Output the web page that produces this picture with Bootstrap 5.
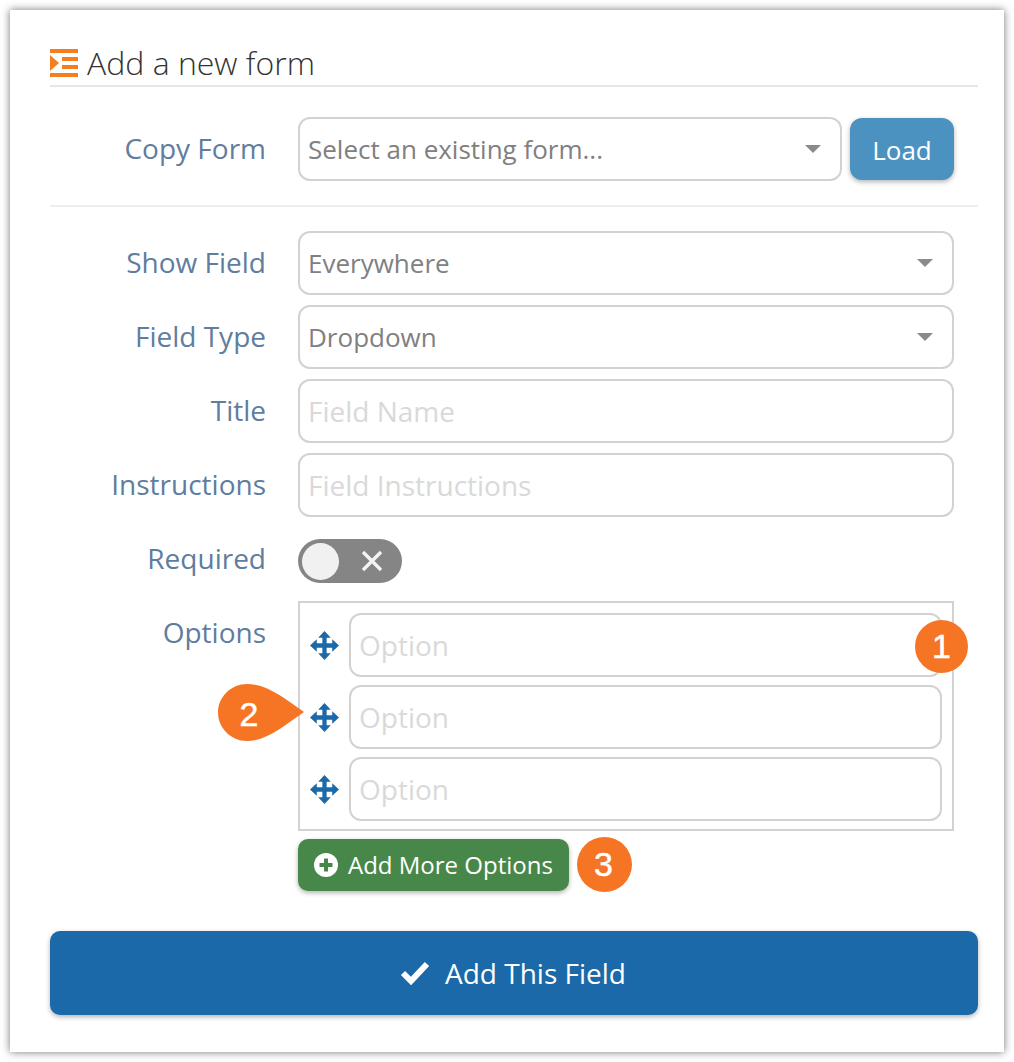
<!DOCTYPE html>
<html lang="en">
<head>
  <meta charset="UTF-8" />
  <meta name="viewport" content="width=device-width, initial-scale=1.0"/>
  <title>Add a new form</title>
  <link href="https://cdn.jsdelivr.net/npm/bootstrap@5.3.0/dist/css/bootstrap.min.css" rel="stylesheet"/>
  <script src="https://cdn.jsdelivr.net/npm/bootstrap@5.3.0/dist/js/bootstrap.bundle.min.js"></script>
  <style>
    body {
      background: #fff;
      font-family: "Open Sans", "Liberation Sans", sans-serif;
    }
    .sheet {
      margin: 10px;
      width: 994px;
      height: 1042px;
      padding: 27px 26px 0 40px;
      background: #fff;
      box-shadow: 0 0 8px rgba(0, 0, 0, .55);
      position: relative;
    }
    .form-head {
      height: 50px;
      padding-top: 4px;
      gap: 8px;
      border-bottom: 2px solid #e6e6e6;
      font-size: 32px;
      font-weight: 300;
      color: #333;
      line-height: 46px;
    }
    .field-row {
      display: flex;
      gap: 32px;
      padding-right: 24px;
      margin-bottom: 10px;
    }
    .copy-row {
      margin-top: 30px;
      margin-bottom: 0;
    }
    .toggle-row {
      height: 74px;
      margin-bottom: 0;
    }
    .options-row { margin-bottom: 0; }
    .field-label {
      width: 216px;
      flex: none;
      text-align: right;
      font-size: 28px;
      line-height: 62px;
      color: #5f7d9e;
      margin: 0;
    }
    .field-box {
      height: 64px;
      border: 2px solid #d2d2d2;
      border-radius: 12px;
      font-size: 28px;
      padding: 0 8px;
      color: #808080;
      box-shadow: none;
      background-color: #fff;
    }
    .field-box::placeholder { color: #d9d9d9; }
    .field-select {
      font-size: 26px;
      background-image: none;
      display: flex;
      align-items: center;
      justify-content: space-between;
      padding-right: 19px;
    }
    .caret-down {
      width: 0;
      height: 0;
      border-left: 8px solid transparent;
      border-right: 8px solid transparent;
      border-top: 8px solid #8a8a8a;
    }
    .load-btn {
      width: 104px;
      height: 62px;
      flex: none;
      align-self: center;
      background: #4b92c1;
      color: #fff;
      font-size: 26px;
      line-height: 64px;
      border: 0;
      border-radius: 12px;
      box-shadow: 0 2px 5px rgba(0, 0, 0, .3);
      padding: 0;
    }
    .soft-rule {
      border-top: 2px solid #eee;
      margin: 24px 0;
      opacity: 1;
    }
    .toggle-pill {
      width: 104px;
      height: 44px;
      margin-top: 12px;
      border-radius: 22px;
      background: #858585;
      padding: 0 19px 0 4px;
    }
    .toggle-knob {
      width: 37px;
      height: 37px;
      border-radius: 50%;
      background: #f1f1f1;
    }
    .options-box {
      border: 2px solid #d2d2d2;
      padding: 10px 10px 8px 10px;
      width: 656px;
      height: 230px;
      gap: 8px;
    }
    .option-line { gap: 10px; }
    .more-btn {
      height: 52px;
      width: 271px;
      background: #47884a;
      color: #fff;
      font-size: 24px;
      line-height: 50px;
      border: 0;
      border-radius: 10px;
      box-shadow: 0 2px 5px rgba(0, 0, 0, .3);
      gap: 10px;
      padding: 0 0 0 16px;
    }
    .submit-btn {
      width: 928px;
      height: 84px;
      margin-top: 40px;
      padding-right: 14px;
      background: #1b69a8;
      color: #fff;
      font-size: 28px;
      border: 0;
      border-radius: 10px;
      box-shadow: 0 2px 5px rgba(0, 0, 0, .3);
      gap: 15px;
    }
    .step-dot {
      background: #f57524;
      color: #fff;
      border-radius: 50%;
      font-family: "Liberation Sans", Arial, sans-serif;
      font-size: 34px;
      -webkit-text-stroke: .5px #fff;
      display: flex;
      align-items: center;
      justify-content: center;
    }
    .step-one {
      position: absolute;
      left: 905px;
      top: 610px;
      width: 53px;
      height: 53px;
    }
    .step-two {
      position: absolute;
      left: 208px;
      top: 674px;
      width: 86px;
      height: 57px;
      font-family: "Liberation Sans", Arial, sans-serif;
      font-size: 34px;
      -webkit-text-stroke: .5px #fff;
      color: #fff;
    }
    .step-two svg { position: absolute; left: 0; top: 0; }
    .step-two span {
      position: absolute;
      left: 0;
      top: 0;
      width: 62px;
      line-height: 60px;
      text-align: center;
    }
    .step-three {
      width: 55px;
      height: 55px;
      padding-right: 2px;
      margin: -2px 0 -1px 8px;
    }
  </style>
</head>
<body>
  <div class="sheet">
    <div class="form-head d-flex align-items-center">
      <svg width="29" height="28" viewBox="0 0 29 28" fill="#f57f20">
        <rect x="0" y="0" width="28" height="4"/>
        <rect x="12" y="8" width="16" height="4"/>
        <rect x="12" y="16" width="16" height="4"/>
        <rect x="0" y="24" width="28" height="4"/>
        <polygon points="0,6 9,14 0,22"/>
      </svg>
      <span>Add a new form</span>
    </div>

    <div class="field-row copy-row">
      <label class="field-label">Copy Form</label>
      <div class="d-flex flex-grow-1 gap-2">
        <div class="field-box field-select flex-grow-1"><span>Select an existing form...</span><i class="caret-down"></i></div>
        <button class="load-btn btn" type="button">Load</button>
      </div>
    </div>
    <hr class="soft-rule">

    <div class="field-row">
      <label class="field-label">Show Field</label>
      <div class="field-box field-select flex-grow-1"><span>Everywhere</span><i class="caret-down"></i></div>
    </div>
    <div class="field-row">
      <label class="field-label">Field Type</label>
      <div class="field-box field-select flex-grow-1"><span>Dropdown</span><i class="caret-down"></i></div>
    </div>
    <div class="field-row">
      <label class="field-label">Title</label>
      <input class="form-control field-box flex-grow-1 w-auto" placeholder="Field Name">
    </div>
    <div class="field-row">
      <label class="field-label">Instructions</label>
      <input class="form-control field-box flex-grow-1 w-auto" placeholder="Field Instructions">
    </div>
    <div class="field-row toggle-row">
      <label class="field-label">Required</label>
      <div class="toggle-pill d-flex align-items-center justify-content-between">
        <div class="toggle-knob"></div>
        <svg width="22" height="22" viewBox="0 0 22 22" stroke="#f4f4f4" stroke-width="3.400"><path d="M2 2 20 20M20 2 2 20"/></svg>
      </div>
    </div>
    <div class="field-row options-row">
      <label class="field-label">Options</label>
      <div>
        <div class="options-box d-flex flex-column">
          <div class="option-line d-flex align-items-center">
            <svg width="29" height="29" viewBox="0 0 30 30" fill="#1b69a8"><use href="#moveIcon"/></svg>
            <input class="form-control field-box flex-grow-1 w-auto" placeholder="Option">
          </div>
          <div class="option-line d-flex align-items-center">
            <svg width="29" height="29" viewBox="0 0 30 30" fill="#1b69a8"><use href="#moveIcon"/></svg>
            <input class="form-control field-box flex-grow-1 w-auto" placeholder="Option">
          </div>
          <div class="option-line d-flex align-items-center">
            <svg width="29" height="29" viewBox="0 0 30 30" fill="#1b69a8"><use href="#moveIcon"/></svg>
            <input class="form-control field-box flex-grow-1 w-auto" placeholder="Option">
          </div>
        </div>
        <div class="d-flex align-items-center mt-2">
          <button class="more-btn btn d-flex align-items-center" type="button">
            <svg width="24" height="24" viewBox="0 0 24 24"><circle cx="12" cy="12" r="12" fill="#fff"/><path d="M12 5.500v13M5.500 12h13" stroke="#47884a" stroke-width="4"/></svg>
            <span>Add More Options</span>
          </button>
          <div class="step-dot step-three">3</div>
        </div>
      </div>
    </div>

    <button class="submit-btn btn d-flex align-items-center justify-content-center" type="button">
      <svg width="30" height="24" viewBox="0 0 30 24" fill="none" stroke="#fff" stroke-width="6"><path d="M3 12 11 20 27 3"/></svg>
      <span>Add This Field</span>
    </button>

    <div class="step-dot step-one">1</div>
    <div class="step-two">
      <svg width="86" height="57" viewBox="0 0 86 57"><path d="M29 0C50 0 68 16 86 28 68 40 50 57 29 57 13 57 0 44 0 28.500 0 13 13 0 29 0Z" fill="#f57524"/></svg>
      <span>2</span>
    </div>
  </div>

  <svg width="0" height="0" class="d-block">
    <defs>
      <g id="moveIcon">
        <path d="M15 0 21.500 7H17.200V12.800H23V8.500L30 15 23 21.500V17.200H17.200V23H21.500L15 30 8.500 23H12.800V17.200H7V21.500L0 15 7 8.500V12.800H12.800V7H8.500Z"/>
      </g>
    </defs>
  </svg>
</body>
</html>
